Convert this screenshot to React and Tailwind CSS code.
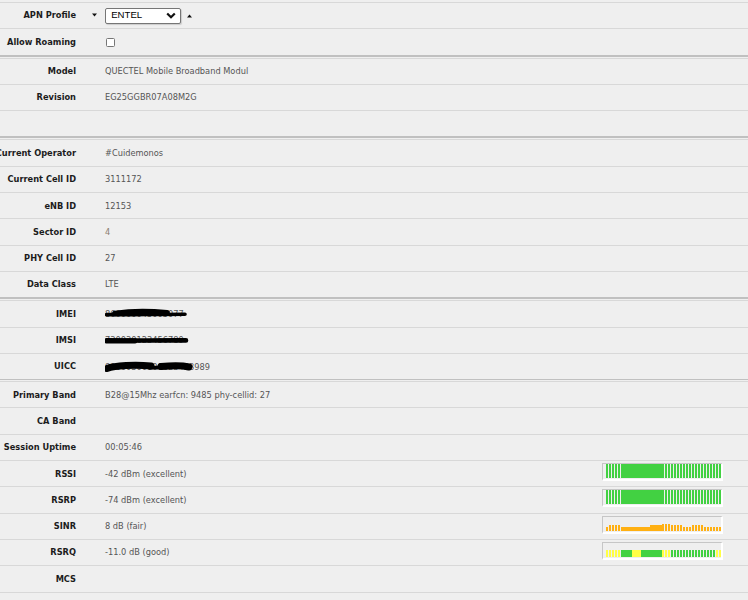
import React from 'react';

const G = '#42d142';
const O = '#ffb012';
const Y = '#ffff45';

// [width, height, color, gapAfter]
const thin = (n, h, c) => Array.from({ length: n }, () => [2, h, c, 1]);

const rssiBars = [...thin(5, 14, G), [41, 14, G, 0], ...thin(20, 14, G)];
const sinrHeights = [7, 7, 7, 6, 6, 6, 6, 4, 4, 4, 6, 6, 6, 6, 4, 4, 4, 4, 4, 4];
const sinrBars = [
  [2, 4, O, 1],
  ...thin(4, 6, O),
  [29, 4, O, 0],
  [12, 6, O, 0],
  ...sinrHeights.map((h) => [2, h, O, 1]),
];
const rsrqBars = [
  ...thin(5, 7, Y),
  [11, 7, G, 0],
  [9, 7, Y, 0],
  [21, 7, G, 0],
  ...thin(3, 7, Y),
  ...thin(15, 7, G),
  ...thin(2, 7, Y),
];

const SignalBox = ({ bars }) => (
  <div className="mr-[25px] mb-[3px] flex h-[18px] w-[121px] shrink-0 items-end border-t border-l border-t-[#c6c6c6] border-l-[#c6c6c6] border-b-2 border-r-2 border-b-white border-r-white pl-[3px] pb-px">
    {bars.map(([w, h, c, gap], i) => (
      <div key={i} className="shrink-0" style={{ width: w, height: h, backgroundColor: c, marginRight: gap }} />
    ))}
  </div>
);

const Row = ({ label, children, extra }) => (
  <div className="flex h-[26.3px] items-center border-t border-[#d8d8d8]">
    <div className="flex w-[76px] shrink-0 justify-end whitespace-nowrap font-bold text-[#1c1c1c]">{label}</div>
    <div className="flex min-w-0 flex-1 items-center whitespace-nowrap pl-[29px] text-[#555]">{children}</div>
    {extra}
  </div>
);

const Sep = () => <div className="h-[3px] border-t-2 border-[#c0c0c0]" />;
const SepThin = () => <div className="h-[2px] border-t-[1.5px] border-[#c0c0c0]" />;

// black marker scribbles over sensitive values
const Redacted = ({ text, paths, width }) => (
  <span className="relative inline-block leading-[10px]">
    {text}
    <svg className="absolute left-0 top-[-3px]" width={width} height="16" viewBox={`0 0 ${width} 16`}>
      {paths.map(([d, sw], i) => (
        <path key={i} d={d} stroke="#000" strokeWidth={sw} strokeLinecap="round" fill="none" />
      ))}
    </svg>
  </span>
);

export default function App() {
  return (
    <div
      className="min-h-[600px] w-full overflow-hidden bg-[#efefef] pt-[2px] text-[8.25px]"
      style={{ fontFamily: '"DejaVu Sans", Verdana, sans-serif' }}
    >
      <Row label="APN Profile">
        <div className="-ml-[12.8px] flex items-center">
          <svg width="5" height="4" viewBox="0 0 5 4" className="mb-[2px] shrink-0">
            <path d="M0 0.5 L5 0.5 L2.5 3.5 Z" fill="#111" />
          </svg>
          <div className="ml-[8px] flex h-[16px] w-[75.5px] items-center justify-between rounded-[2px] border border-[#767676] bg-white pl-[5px] pr-[4px] text-[9.6px] text-black shadow-[1px_1px_1px_rgba(0,0,0,0.15)]" style={{ fontFamily: '"Liberation Sans", Arial, sans-serif' }}>
            <span>ENTEL</span>
            <svg width="10" height="7" viewBox="0 0 10 7">
              <path d="M1.2 1.5 L5 5.3 L8.8 1.5" stroke="#111" strokeWidth="2.2" fill="none" />
            </svg>
          </div>
          <svg width="5" height="4" viewBox="0 0 5 4" className="ml-[6px] shrink-0">
            <path d="M0 3.5 L5 3.5 L2.5 0.5 Z" fill="#111" />
          </svg>
        </div>
      </Row>
      <Row label="Allow Roaming">
        <div className="ml-[1.3px] mt-[1px] h-[8.5px] w-[8.5px] rounded-[1.5px] border border-[#767676] bg-white" />
      </Row>
      <Sep />
      <Row label="Model">QUECTEL Mobile Broadband Modul</Row>
      <Row label="Revision">EG25GGBR07A08M2G</Row>
      <Row label="" />
      <Sep />
      <Row label="Current Operator">#Cuidemonos</Row>
      <Row label="Current Cell ID">3111172</Row>
      <Row label="eNB ID">12153</Row>
      <Row label="Sector ID">
        <span className="text-[#8c7d70]">4</span>
      </Row>
      <Row label="PHY Cell ID">27</Row>
      <Row label="Data Class">LTE</Row>
      <Sep />
      <Row label="IMEI">
        <Redacted
          text="866000045005077"
          width={84}
          paths={[
            ['M1.5 8.6 C 20 9, 50 8.3, 80 8.3', 3.6],
            ['M10 7.4 C 26 5.2, 45 5.2, 62 6.8', 5.6],
          ]}
        />
      </Row>
      <Row label="IMSI">
        <Redacted
          text="730030123456789"
          width={86}
          paths={[
            ['M1.5 8.4 C 20 8.8, 55 8.2, 81 8.4', 4.6],
            ['M2 9 L 30 8.8', 5.2],
          ]}
        />
      </Row>
      <Row label="UICC">
        <Redacted
          text="89560300000123453989"
          width={90}
          paths={[
            ['M2 9.5 C 10 6.5, 30 5.5, 46 7', 7],
            ['M44 8.6 L 58 8.6', 3.6],
            ['M56 7.5 C 66 6.5, 78 6.5, 84 8', 7],
          ]}
        />
      </Row>
      <SepThin />
      <Row label="Primary Band">B28@15Mhz earfcn: 9485 phy-cellid: 27</Row>
      <Row label="CA Band" />
      <Row label="Session Uptime">00:05:46</Row>
      <Row label="RSSI" extra={<SignalBox bars={rssiBars} />}>-42 dBm (excellent)</Row>
      <Row label="RSRP" extra={<SignalBox bars={rssiBars} />}>-74 dBm (excellent)</Row>
      <Row label="SINR" extra={<SignalBox bars={sinrBars} />}>8 dB (fair)</Row>
      <Row label="RSRQ" extra={<SignalBox bars={rsrqBars} />}>-11.0 dB (good)</Row>
      <Row label="MCS" />
      <div className="border-t border-[#d8d8d8]" />
    </div>
  );
}
